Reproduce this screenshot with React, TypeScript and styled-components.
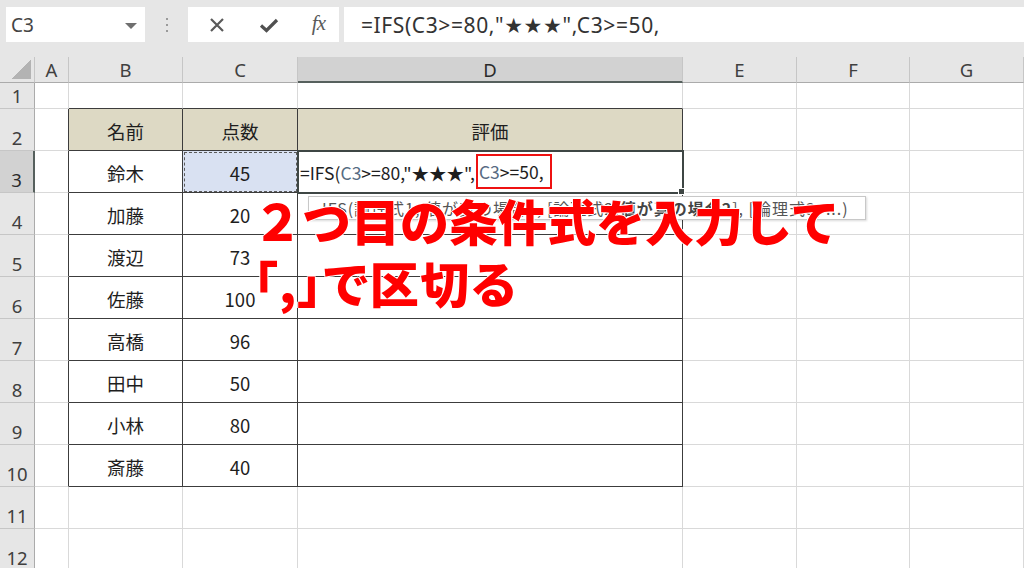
import { Fragment } from "react";
import styled, { createGlobalStyle, css } from "styled-components";

const GlobalStyle = createGlobalStyle`
    html, body {
        margin: 0;
        padding: 0;
        background: #ffffff;
        overflow: hidden;
    }
    body {
        font-family: "Noto Sans CJK JP", "Noto Sans", sans-serif;
        color: #222;
    }
`;

const COLS = ["A", "B", "C", "D", "E", "F", "G"];
const ROWS = [1, 2, 3, 4, 5, 6, 7, 8, 9, 10, 11, 12];

const DATA: Record<number, [string, string]> = {
    2: ["名前", "点数"],
    3: ["鈴木", "45"],
    4: ["加藤", "20"],
    5: ["渡辺", "73"],
    6: ["佐藤", "100"],
    7: ["高橋", "96"],
    8: ["田中", "50"],
    9: ["小林", "80"],
    10: ["斎藤", "40"],
};

function App() {
    const cellText = (r: number, ci: number) => {
        if (r === 2 && ci === 3) return "評価";
        if (r === 3 && ci === 3) return <FormulaCellText />;
        const row = DATA[r];
        if (!row) return null;
        if (ci === 1) return row[0];
        if (ci === 2) return row[1];
        return null;
    };

    return (
        <Page>
            <GlobalStyle />
            <FormulaBar>
                <NameBox>
                    <span>C3</span>
                    <Caret />
                </NameBox>
                <Grip>
                    <i />
                    <i />
                    <i />
                </Grip>
                <ButtonsBox>
                    <IconButton>
                        <svg width="18" height="18" viewBox="0 0 18 18">
                            <path d="M3 3 L15 15 M15 3 L3 15" stroke="#5a5a5a" strokeWidth="2.2" fill="none" />
                        </svg>
                    </IconButton>
                    <IconButton>
                        <svg width="20" height="18" viewBox="0 0 20 18">
                            <path d="M2 9.5 L7.5 14.5 L18 4" stroke="#505050" strokeWidth="3.2" fill="none" strokeLinejoin="miter" />
                        </svg>
                    </IconButton>
                    <FxLabel>fx</FxLabel>
                </ButtonsBox>
                <FormulaInput>=IFS(C3&gt;=80,"★★★",C3&gt;=50,</FormulaInput>
            </FormulaBar>

            <Sheet>
                <Corner />
                {COLS.map((c) => (
                    <ColHead key={c} $selected={c === "D"}>
                        {c}
                    </ColHead>
                ))}
                {ROWS.map((r) => (
                    <Fragment key={r}>
                        <RowHead $selected={r === 3}>{r}</RowHead>
                        {COLS.map((c, ci) => (
                            <Cell
                                key={c}
                                $darkRight={ci <= 3 && r >= 2 && r <= 10}
                                $darkBottom={ci >= 1 && ci <= 3 && r >= 1 && r <= 10}
                                $fill={r === 2 && ci >= 1 && ci <= 3 ? "tan" : r === 3 && ci === 2 ? "ref" : undefined}
                                $active={r === 3 && ci === 3}
                                $align={r === 3 && ci === 3 ? "left" : "center"}
                            >
                                {cellText(r, ci)}
                            </Cell>
                        ))}
                    </Fragment>
                ))}
            </Sheet>

            <Tooltip>
                IFS(論理式1, 値が真の場合1, [論理式2, <b>値が真の場合2</b>], [論理式3, ...)
            </Tooltip>

            <Callout>
                <CalloutLine>２つ目の条件式を入力して</CalloutLine>
                <CalloutLine $proportional>「,」で区切る</CalloutLine>
            </Callout>
        </Page>
    );
}

function FormulaCellText() {
    return (
        <FormulaText>
            =IFS(<Ref>C3</Ref>&gt;=80,"★★★",
            <Highlight>
                <Ref>C3</Ref>&gt;=50,
            </Highlight>
        </FormulaText>
    );
}

export default App;

const Page = styled.div`
    position: relative;
    width: 1024px;
    height: 568px;
    overflow: hidden;
    background: #ffffff;
`;

const FormulaBar = styled.div`
    display: flex;
    align-items: flex-start;
    height: 57px;
    padding: 7px 0 0 6px;
    box-sizing: border-box;
    background: #e6e6e6;
`;

const NameBox = styled.div`
    display: flex;
    align-items: center;
    justify-content: space-between;
    width: 139px;
    height: 35px;
    padding: 0 8px 0 5px;
    box-sizing: border-box;
    background: #ffffff;
    font-family: "Noto Sans", sans-serif;
    font-size: 19px;
    color: #444;
`;

const Caret = styled.span`
    width: 0;
    height: 0;
    border-left: 6px solid transparent;
    border-right: 6px solid transparent;
    border-top: 6px solid #6f6f6f;
    margin-top: 2px;
`;

const Grip = styled.div`
    display: flex;
    flex-direction: column;
    gap: 4px;
    width: 43px;
    height: 35px;
    align-items: center;
    justify-content: center;

    i {
        display: block;
        width: 2px;
        height: 2px;
        background: #9a9a9a;
    }
`;

const ButtonsBox = styled.div`
    display: flex;
    align-items: center;
    justify-content: space-between;
    width: 151px;
    height: 35px;
    padding: 0 14px 0 19px;
    box-sizing: border-box;
    background: #ffffff;
`;

const IconButton = styled.span`
    display: flex;
    align-items: center;
    justify-content: center;
    width: 20px;
    height: 20px;
`;

const FxLabel = styled.span`
    font-family: "Liberation Serif", serif;
    font-style: italic;
    font-size: 21px;
    color: #5a5a5a;
    letter-spacing: -1px;
    margin-top: -3px;
`;

const FormulaInput = styled.div`
    flex: 1;
    display: flex;
    align-items: center;
    height: 35px;
    margin-left: 5px;
    padding-left: 17px;
    background: #ffffff;
    font-family: "Noto Sans", "DejaVu Sans", sans-serif;
    font-size: 21px;
    letter-spacing: 0.6px;
    color: #333;
    white-space: nowrap;
`;

const Sheet = styled.div`
    display: grid;
    grid-template-columns: 35px 34px 114px 115px 385px 114px 113px 1fr;
    grid-template-rows: 26px 26px repeat(11, 42px);
`;

const headBase = css`
    display: flex;
    box-sizing: border-box;
    background: #e6e6e6;
    color: #404040;
    font-family: "Noto Sans", sans-serif;
    font-size: 18.5px;
`;

const Corner = styled.div`
    ${headBase};
    position: relative;
    border-right: 1px solid #c6c6c6;
    border-bottom: 1px solid #ababab;

    &::after {
        content: "";
        position: absolute;
        right: 3px;
        bottom: 3px;
        width: 20px;
        height: 19px;
        background: linear-gradient(to bottom right, transparent 50%, #b3b3b3 50%);
    }
`;

const ColHead = styled.div<{ $selected?: boolean }>`
    ${headBase};
    align-items: center;
    justify-content: center;
    border-right: 1px solid #c6c6c6;
    border-bottom: 1px solid #ababab;
    ${(p) =>
        p.$selected &&
        css`
            background: #d2d2d2;
            border-bottom: 2px solid #56605d;
            color: #2a2a2a;
        `}
`;

const RowHead = styled.div<{ $selected?: boolean }>`
    ${headBase};
    align-items: flex-end;
    justify-content: center;
    padding-bottom: 0;
    line-height: 1.3;
    border-right: 1px solid #ababab;
    border-bottom: 1px solid #c6c6c6;
    ${(p) =>
        p.$selected &&
        css`
            background: #d2d2d2;
            border-right: 2px solid #56605d;
            color: #2a2a2a;
        `}
`;

const Cell = styled.div<{
    $darkRight?: boolean;
    $darkBottom?: boolean;
    $fill?: "tan" | "ref";
    $active?: boolean;
    $align: "left" | "center";
}>`
    position: relative;
    display: flex;
    align-items: center;
    justify-content: ${(p) => (p.$align === "left" ? "flex-start" : "center")};
    padding: 2px 0 0 ${(p) => (p.$align === "left" ? "2px" : "0")};
    box-sizing: border-box;
    white-space: nowrap;
    font-size: 18.5px;
    color: #1e1e1e;
    border-right: 1px solid ${(p) => (p.$darkRight ? "#3c3c3c" : "#d9d9d9")};
    border-bottom: 1px solid ${(p) => (p.$darkBottom ? "#3c3c3c" : "#d9d9d9")};
    background: ${(p) => (p.$fill === "tan" ? "#ddd9c4" : p.$fill === "ref" ? "#d9e1f2" : "#ffffff")};

    ${(p) =>
        p.$fill === "ref" &&
        css`
            outline: 1px dashed #5a5a5a;
            outline-offset: -2px;
        `}

    ${(p) =>
        p.$active &&
        css`
            z-index: 1;
            outline: 2px solid #3e4644;
            outline-offset: -1px;

            &::after {
                content: "";
                position: absolute;
                right: -3px;
                bottom: -3px;
                width: 5px;
                height: 5px;
                background: #3e4644;
                border: 1px solid #ffffff;
            }
        `}
`;

const FormulaText = styled.span`
    display: inline-flex;
    align-items: center;
    font-size: 17.5px;
`;

const Ref = styled.span`
    color: #566b82;
`;

const Highlight = styled.span`
    display: inline-flex;
    align-items: center;
    height: 35px;
    padding: 0 6px 0 1px;
    margin-left: 1px;
    margin-top: -2px;
    box-sizing: border-box;
    border: 2px solid #ee1111;
`;

const Tooltip = styled.div`
    position: absolute;
    left: 308px;
    top: 196px;
    width: 558px;
    height: 24px;
    box-sizing: border-box;
    padding-left: 13px;
    display: flex;
    align-items: center;
    background: #ffffff;
    border: 1px solid #c8c8c8;
    box-shadow: 1px 1px 2px rgba(0, 0, 0, 0.15);
    font-size: 16px;
    letter-spacing: 1px;
    color: #555;
    white-space: nowrap;

    b {
        font-weight: 700;
        color: #444;
    }
`;

const Callout = styled.div`
    position: absolute;
    left: 253px;
    top: 189px;
    display: flex;
    flex-direction: column;
    color: #ff0000;
    font-size: 49px;
    font-weight: 800;
    line-height: 62px;
    text-shadow: 1px 0 0 #fff, -1px 0 0 #fff, 0 1px 0 #fff, 0 -1px 0 #fff;
    white-space: nowrap;
`;

const CalloutLine = styled.div<{ $proportional?: boolean }>`
    ${(p) =>
        p.$proportional &&
        css`
            font-feature-settings: "palt";
            letter-spacing: 1.5px;
        `}
`;
